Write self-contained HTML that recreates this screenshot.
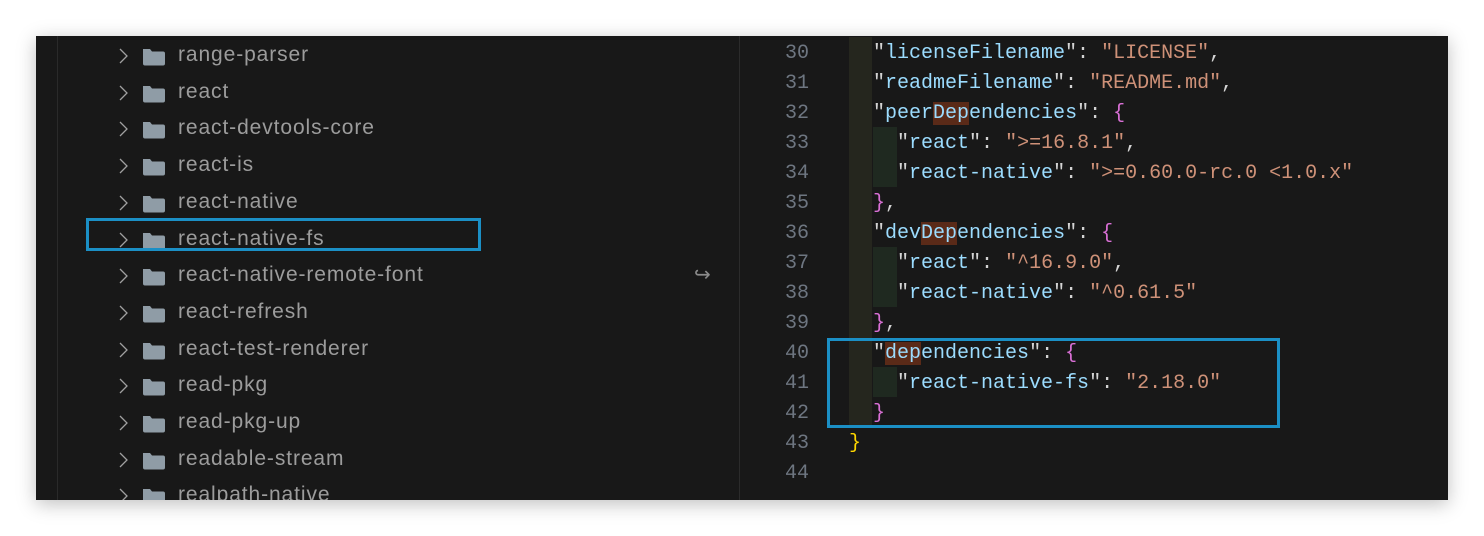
<!DOCTYPE html>
<html><head><style>
body{margin:0;width:1484px;height:536px;background:#fff;position:relative;overflow:hidden;font-family:"Liberation Sans",sans-serif}
#win{position:absolute;left:36px;top:36px;width:1412px;height:464px;background:#181818;overflow:hidden;box-shadow:0 4px 18px rgba(0,0,0,.25)}
#vl{position:absolute;left:21px;top:0;width:1px;height:464px;background:#2a2a2a}
#div{position:absolute;left:703px;top:0;width:1px;height:464px;background:#2b2b2b}
.row{position:absolute;left:0;height:36px;width:700px;color:#9c9c9c;font-size:21px;letter-spacing:0.9px;line-height:36px}
.row .t{position:absolute;left:142px}
.row svg{position:absolute;left:80px;top:8px}
.box{position:absolute;border:3px solid #1b8fc5;box-sizing:border-box}
.ln{position:absolute;left:703px;width:70px;text-align:right;color:#6e7681;font:20px/30px "Liberation Mono",monospace}
.code{position:absolute;left:813px;font:20px/30px "Liberation Mono",monospace;color:#9cdcfe;white-space:pre}
.s{color:#ce9178}.p{color:#d4d4d4}.b{color:#da70d6}.y{color:#ffd700}
.g{position:absolute}
.hl{background:#5a2a18}
</style></head><body>
<div id="win">
<div id="vl"></div><div id="div"></div>
</div>
<div id="tree" style="position:absolute;left:36px;top:37px;width:703px;height:463px;overflow:hidden"></div>
<div style="position:absolute;left:694px;top:262px;color:#8a8a8a;font-size:20px">&#8618;</div>
<div id="code" style="position:absolute;left:36px;top:37px;width:1412px;height:463px;overflow:hidden">
<div class="g" style="left:813px;top:0;width:23px;height:390px;background:#25261e"></div>
<div class="g" style="left:837px;top:90px;width:24px;height:60px;background:#1f2920"></div>
<div class="g" style="left:837px;top:210px;width:24px;height:60px;background:#1f2920"></div>
<div class="g" style="left:837px;top:330px;width:24px;height:30px;background:#1f2920"></div>
</div>
<div class="box" style="left:86px;top:218px;width:395px;height:33px"></div>
<div class="box" style="left:827px;top:338px;width:453px;height:90px"></div>
<script>
var names=["range-parser","react","react-devtools-core","react-is","react-native","react-native-fs","react-native-remote-font","react-refresh","react-test-renderer","read-pkg","read-pkg-up","readable-stream","realpath-native"];
var h="";names.forEach(function(n,i){var y=Math.round(i*36.7);
h+='<div class="row" style="top:'+y+'px"><svg width="70" height="22"><path d="M4 4l7 7-7 7" stroke="#a0a0a0" stroke-width="1.3" fill="none"/><path d="M27 4h7l2 2.5h11a2 2 0 0 1 2 2v10a2 2 0 0 1-2 2H29a2 2 0 0 1-2-2z" fill="#8f9ca6"/></svg><span class="t">'+n+'</span></div>'});
document.getElementById('tree').innerHTML=h;
var L=[
'<span class="p">"</span>licenseFilename<span class="p">": </span><span class="s">"LICENSE"</span><span class="p">,</span>',
'<span class="p">"</span>readmeFilename<span class="p">": </span><span class="s">"README.md"</span><span class="p">,</span>',
'<span class="p">"</span>peer<span class="hl">Dep</span>endencies<span class="p">": </span><span class="b">{</span>',
'  <span class="p">"</span>react<span class="p">": </span><span class="s">"&gt;=16.8.1"</span><span class="p">,</span>',
'  <span class="p">"</span>react-native<span class="p">": </span><span class="s">"&gt;=0.60.0-rc.0 &lt;1.0.x"</span>',
'<span class="b">}</span><span class="p">,</span>',
'<span class="p">"</span>dev<span class="hl">Dep</span>endencies<span class="p">": </span><span class="b">{</span>',
'  <span class="p">"</span>react<span class="p">": </span><span class="s">"^16.9.0"</span><span class="p">,</span>',
'  <span class="p">"</span>react-native<span class="p">": </span><span class="s">"^0.61.5"</span>',
'<span class="b">}</span><span class="p">,</span>',
'<span class="p">"</span><span class="hl">dep</span>endencies<span class="p">": </span><span class="b">{</span>',
'  <span class="p">"</span>react-native-fs<span class="p">": </span><span class="s">"2.18.0"</span>',
'<span class="b">}</span>'];
var c="";for(var i=0;i<15;i++){c+='<div class="ln" style="top:'+(2+i*30)+'px">'+(30+i)+'</div>';}
L.forEach(function(t,i){c+='<div class="code" style="left:837px;top:'+(2+i*30)+'px">'+t+'</div>'});
c+='<div class="code y" style="left:813px;top:'+(2+13*30)+'px">}</div>';
document.getElementById('code').innerHTML+=c;
</script>
</body></html>
